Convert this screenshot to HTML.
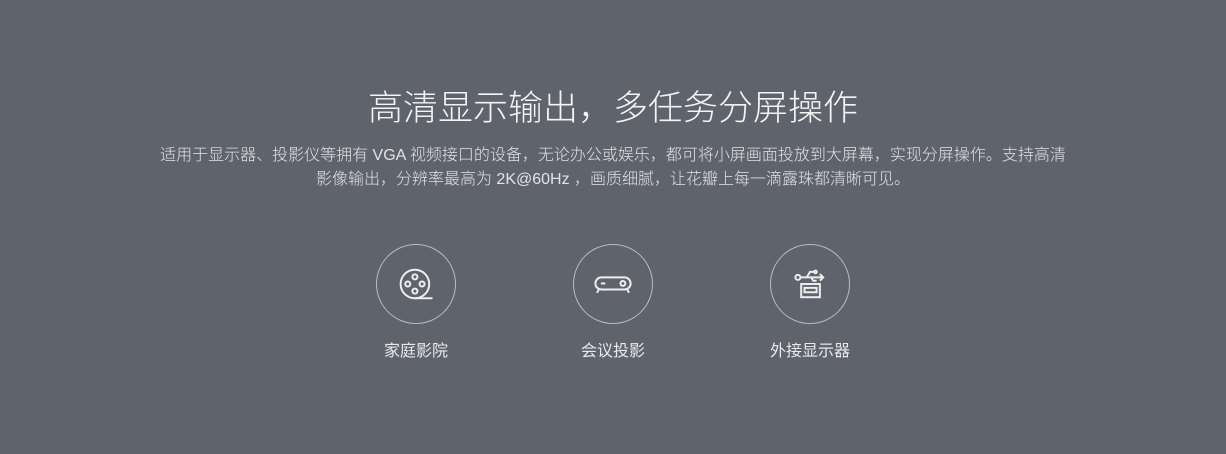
<!DOCTYPE html>
<html><head><meta charset="utf-8"><style>
html,body{margin:0;padding:0;}
body{width:1226px;height:454px;background:#5f636c;font-family:"Liberation Sans","Noto Sans CJK SC",sans-serif;color:#fff;position:relative;overflow:hidden;}
h1{position:absolute;top:86px;left:0;width:1226px;text-align:center;margin:0;font-weight:300;font-size:35px;line-height:46px;color:#f4f4f4;}
p{position:absolute;top:144px;left:0;width:1226px;text-align:center;margin:0;font-size:16px;line-height:24px;color:#e2e3e6;white-space:nowrap;font-weight:300;}
.it{position:absolute;top:244px;width:80px;text-align:center;}
.c{width:78px;height:78px;border:1px solid #b9bcc2;border-radius:50%;position:relative;}
.c svg{position:absolute;left:17px;top:17px;}
.l{position:absolute;top:98px;left:-40px;width:160px;font-size:16px;color:#e8e9eb;line-height:20px;}
</style></head><body>
<h1>高清显示输出，多任务分屏操作</h1>
<p>适用于显示器、投影仪等拥有 VGA 视频接口的设备，无论办公或娱乐，都可将小屏画面投放到大屏幕，实现分屏操作。支持高清<br>影像输出，分辨率最高为 2K@60Hz ，画质细腻，让花瓣上每一滴露珠都清晰可见。</p>
<div class="it" style="left:376px"><div class="c"><svg width="44" height="44" viewBox="0 0 40 40" fill="none" stroke="#eee" stroke-width="1.8"><circle cx="19" cy="20" r="13"/><circle cx="19" cy="13.5" r="2.3"/><circle cx="19" cy="26.5" r="2.3"/><circle cx="12.5" cy="20" r="2.3"/><circle cx="25.5" cy="20" r="2.3"/><path d="M19 33H35"/></svg></div><div class="l">家庭影院</div></div>
<div class="it" style="left:573px"><div class="c"><svg width="44" height="44" viewBox="0 0 40 40" fill="none" stroke="#eee" stroke-width="1.8"><rect x="4" y="14" width="32" height="11" rx="5.5"/><path d="M9 19.5h4"/><circle cx="29" cy="19.5" r="2.2"/><path d="M7 25l-1.5 3M33 25l1.5 3"/></svg></div><div class="l">会议投影</div></div>
<div class="it" style="left:770px"><div class="c"><svg width="44" height="44" viewBox="0 0 40 40" fill="none" stroke="#eee" stroke-width="1.8"><circle cx="9" cy="14" r="2.3"/><path d="M11.5 14H32M29 11l3 3-3 3M17 14l3-5h4M21 14l2 3h3"/><circle cx="25" cy="9" r="1.2"/><rect x="12" y="20" width="17" height="12"/><rect x="15" y="23.5" width="11" height="4"/></svg></div><div class="l">外接显示器</div></div>
</body></html>
